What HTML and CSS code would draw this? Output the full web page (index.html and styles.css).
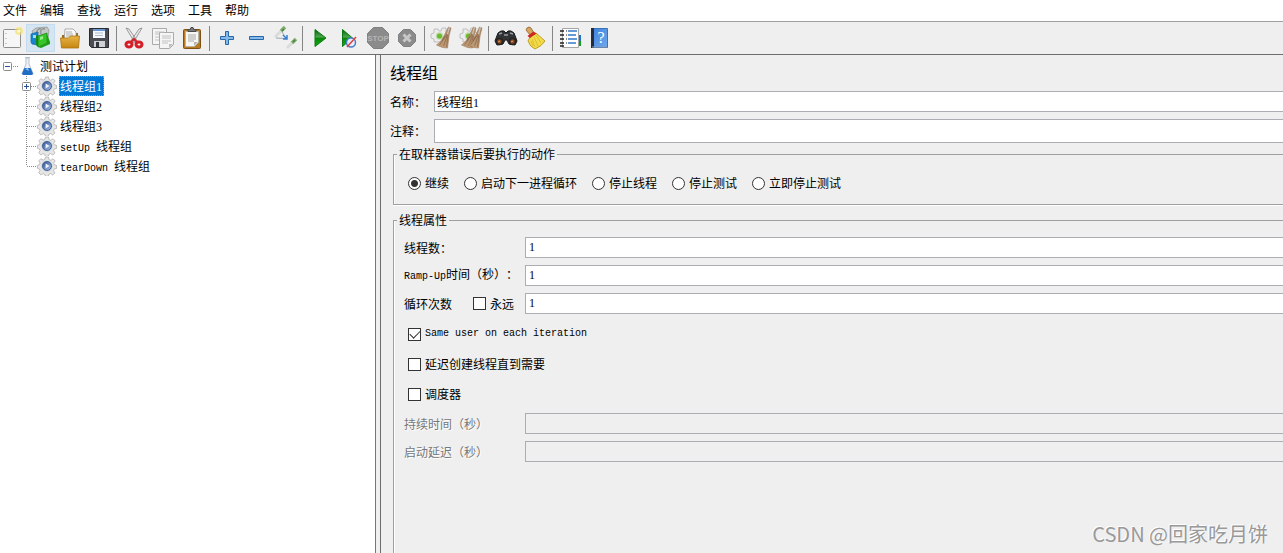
FILE: index.html
```html
<!DOCTYPE html>
<html lang="zh-CN">
<head>
<meta charset="utf-8">
<title>线程组</title>
<link rel="stylesheet" href="styles.css">
</head>
<body>
<svg class="defs" aria-hidden="true">
  <defs>
    <linearGradient id="green" x1="0" y1="0" x2="0" y2="1"><stop offset="0" stop-color="#0a5a14"/><stop offset=".45" stop-color="#4fa852"/><stop offset=".5" stop-color="#07860b"/><stop offset="1" stop-color="#12b012"/></linearGradient>
    <linearGradient id="folder" x1="0" y1="0" x2="0" y2="1"><stop offset="0" stop-color="#e9b447"/><stop offset="1" stop-color="#c58610"/></linearGradient>
    <linearGradient id="blue" x1="0" y1="0" x2="1" y2="1"><stop offset="0" stop-color="#3f82dc"/><stop offset="1" stop-color="#6fa8ee"/></linearGradient>
    <linearGradient id="hub" x1="0" y1="0" x2="1" y2="1"><stop offset="0" stop-color="#30508f"/><stop offset="1" stop-color="#a9c4ea"/></linearGradient>
    <linearGradient id="straw" x1="0" y1="0" x2="0" y2="1"><stop offset="0" stop-color="#a98763"/><stop offset="1" stop-color="#c19c76"/></linearGradient>
    <symbol id="gear" viewBox="0 0 20 20">
      <path d="M8.500 1h3l.6 2.600 1.700.7 2.300-1.500 2.100 2.200-1.500 2.200.7 1.600 2.200.6v3l-2.400.6-.7 1.700 1.500 2.200-2.200 2.100-2.200-1.400-1.700.7-.6 2h-3l-.6-2-1.700-.7-2.200 1.300-2.100-2.100 1.400-2.200-.7-1.600L.4 12.300v-3l2-.6.7-1.700-1.300-2.200 2.100-2.100 2.200 1.400 1.700-.7z" fill="#e6e6e6" stroke="#a8a8a8" stroke-width=".7"/>
      <circle cx="10" cy="10" r="5.600" fill="#c3cbd7"/>
      <circle cx="10" cy="10" r="4.500" fill="url(#hub)" stroke="#34528b" stroke-width=".8"/>
      <path d="M8.600 7.400 12.500 10l-3.900 2.600z" fill="#eef5ff"/>
    </symbol>
    <symbol id="branch" viewBox="0 0 16 20"><path d="M5.500 0v20M6 10.500h10" fill="none" stroke="#8a8a8a" stroke-dasharray="1 1"/></symbol>
    <symbol id="branch-end" viewBox="0 0 16 20"><path d="M5.500 0v10M6 10.500h10" fill="none" stroke="#8a8a8a" stroke-dasharray="1 1"/></symbol>
    <symbol id="broom" viewBox="0 0 24 24">
      <path d="m18.500 1 2.500 1-2 8-1.500 12-5-.5-6-2.500c4-3 6-6 8-10z" fill="url(#straw)" stroke="#9a7654" stroke-width=".6"/>
      <path d="M17 8 9.500 19M17.500 9l-4 11M18 10l-1.500 11M15 10l-3 5" stroke="#7d5d40" stroke-width=".6" fill="none"/>
      <path d="m19.500 1-2 7" stroke="#c9c2bb" stroke-width="1.200"/>
    </symbol>
    <symbol id="cog-back" viewBox="0 0 24 24">
      <path d="M4 3h4l1 2h2l1-3h4v4l2 1v4l-2 1v4H4v-3l-3-1V8l3-1z" fill="#ececec" stroke="#b4b4b4" stroke-width=".8"/>
      <circle cx="9.500" cy="10" r="3.800" fill="#c3dcb2"/><circle cx="9.500" cy="10" r="2.600" fill="#68bd2f"/>
    </symbol>
  </defs>
</svg>

<nav class="menubar">
  <button class="menu">文件</button>
  <button class="menu">编辑</button>
  <button class="menu">查找</button>
  <button class="menu">运行</button>
  <button class="menu">选项</button>
  <button class="menu">工具</button>
  <button class="menu">帮助</button>
</nav>

<div class="toolbar" role="toolbar">
  <button class="tool tool-first" aria-label="新建"><svg viewBox="0 0 24 24"><rect x="3.500" y="3.500" width="17" height="18" rx="1" fill="#f6f6f6" stroke="#8d8d8d"/><path d="M6 7v12" stroke="#999" stroke-dasharray="1 4"/><circle cx="19" cy="5" r="4" fill="#f5e36b" opacity=".7"/><circle cx="19" cy="5" r="1.600" fill="#fffbd8"/></svg></button>
  <button class="tool tool-hot" aria-label="模板"><svg viewBox="0 0 24 24"><path d="M3 5 7 2l11-1 2 3-1 8-12 5z" fill="#c3c7c6" stroke="#8b908f" stroke-width=".7"/><path d="M8 9c-1-4 1-7 4-6M12 8c-1-4 1-6 4-5" stroke="#747a78" fill="none"/><path d="m2 8 7-2v13l-6-1-1-2z" fill="#1a86d2" stroke="#0c66a7" stroke-width=".7"/><path d="M4 9h3v3H4z" fill="#a7dbf7"/><path d="m7 10 2-2v13l-2-2z" fill="#15881a"/><path d="m9 10 9-3v10l-9 4z" fill="#38c529" stroke="#168111" stroke-width=".7"/><path d="m18 8 3 8v2l-9 4-3-1 9-4z" fill="#1aa015"/><path d="M11 11l3-1v3l-3 1z" fill="#98ec87"/></svg></button>
  <button class="tool" aria-label="打开"><svg viewBox="0 0 24 24"><path d="M4 9h4l2-2h10v12H4z" fill="#9a6d1b"/><path d="M7 3h8l3 3v10H6z" fill="#fafafa" stroke="#999" stroke-width=".8"/><path d="M8 6h6M8 8h7M8 10h7" stroke="#aaa"/><path d="M2.500 12h8l2-2h9l-1 12H3.500z" fill="url(#folder)" stroke="#a87312" stroke-width=".8"/></svg></button>
  <button class="tool" aria-label="保存"><svg viewBox="0 0 24 24"><path d="M2.500 2.500h19v19h-17l-2-2z" fill="#4b4e55" stroke="#292b30"/><path d="M6 3h12v9H6z" fill="#f5f8fc"/><path d="M6 3h12v2H6z" fill="#6796d3"/><path d="M8 7h8M8 9.500h8" stroke="#b3bdca"/><path d="M7 15h11v6H7z" fill="#cfd1d4"/><path d="M9 16h3v5H9z" fill="#34373c"/></svg></button>
  <span class="separator"></span>
  <button class="tool" aria-label="剪切"><svg viewBox="0 0 24 24"><path d="m4 2 3 1 9 13-3 1zM20 2l-3 1-9 13 3 1z" fill="#e6e6e6" stroke="#888" stroke-width=".8"/><g fill="none" stroke="#d51d27" stroke-width="3"><ellipse cx="7" cy="18.500" rx="3" ry="2.500"/><ellipse cx="17" cy="18.500" rx="3" ry="2.500"/></g><path d="m9 16 3-3 3 3" stroke="#d51d27" stroke-width="2" fill="none"/></svg></button>
  <button class="tool" aria-label="复制"><svg viewBox="0 0 24 24"><g fill="#f5f5f5" stroke="#aaa"><path d="M1.500 2.500h14v16h-14z"/><path d="M8.500 6.500h14v12l-4 4h-10z"/></g><path d="M4 6h9M4 8h4M4 11h4M4 14h4M11 10h9M11 12h9M11 15h9M11 17h6" stroke="#c2c2c2"/><path d="M18 22v-4h4z" fill="#bdbdbd"/></svg></button>
  <button class="tool" aria-label="粘贴"><svg viewBox="0 0 24 24"><rect x="3.500" y="3.500" width="17" height="19" rx="1" fill="#b87920" stroke="#805115"/><path d="M5.500 5.500h13v11l-4 4h-9z" fill="#f6f6f4" stroke="#b9b2a5"/><path d="M8 5.500V3.500h2l1-2h2l1 2h2v2z" fill="#777" stroke="#4b4b4b"/><path d="M8 9h8M8 11h8M8 13h8M8 15h6" stroke="#aaa"/><path d="M14 20v-4h4z" fill="#b6b6b2"/></svg></button>
  <span class="separator"></span>
  <button class="tool" aria-label="展开"><svg viewBox="0 0 24 24"><path d="M10.500 5.500h3v5h5v3h-5v5h-3v-5h-5v-3h5z" fill="#85bae8" stroke="#2667aa"/></svg></button>
  <button class="tool" aria-label="折叠"><svg viewBox="0 0 24 24"><path d="M5.500 10.500h14v3h-14z" fill="#85bae8" stroke="#2667aa"/></svg></button>
  <button class="tool" aria-label="切换"><svg viewBox="0 0 24 24"><path d="m2 11 6-6M14 22l5-5" stroke="#d9dcd8" stroke-width="3"/><path d="m8 5 4-4M19 17l4-4" stroke="#7fae6c" stroke-width="3.500"/><path d="m9 5 2-2M20 16l2-2" stroke="#4f7d43" stroke-width="1.500"/><path d="m3 12 9 .5M9 6l2 3" fill="none" stroke="#9ba7b2"/><path d="m10 9 4 4m0-4v4h-4" fill="none" stroke="#367fd0" stroke-width="1.500"/></svg></button>
  <span class="separator"></span>
  <button class="tool" aria-label="启动"><svg viewBox="0 0 24 24"><path d="m7 3.500 11 8.500-11 8.500z" fill="url(#green)" stroke="#0b7a10"/></svg></button>
  <button class="tool" aria-label="不停顿启动"><svg viewBox="0 0 24 24"><path d="m5.500 3.500 10 8.500-10 8.500z" fill="url(#green)" stroke="#0b7a10"/><circle cx="14" cy="16.500" r="4.500" fill="#e6eefb" stroke="#477dcc" stroke-width="1.500"/><path d="m10 21 9-10" stroke="#e33f3f" stroke-width="1.500"/></svg></button>
  <button class="tool" aria-label="停止" disabled><svg viewBox="0 0 24 24"><path d="M7.500 1.500h9l6 6v9l-6 6h-9l-6-6v-9z" fill="#8b8b8b" stroke="#808080"/><text x="12" y="15" class="stop-text">STOP</text></svg></button>
  <button class="tool" aria-label="关闭" disabled><svg viewBox="0 0 24 24"><path d="M8.500 3.500h7l5 5v7l-5 5h-7l-5-5v-7z" fill="#8b8b8b" stroke="#808080"/><path d="m8.500 8.500 7 7m0-7-7 7" stroke="#c8c8c8" stroke-width="3"/></svg></button>
  <span class="separator"></span>
  <button class="tool" aria-label="清除"><svg viewBox="0 0 24 24"><use href="#cog-back"/><use href="#broom"/></svg></button>
  <button class="tool" aria-label="清除全部"><svg viewBox="0 0 24 24"><use href="#cog-back"/><use href="#broom" x="-4"/><use href="#broom" x="2"/></svg></button>
  <span class="separator"></span>
  <button class="tool" aria-label="查找"><svg viewBox="0 0 24 24"><path d="M4 7q3-3 6-2l2 2 2-2q3-1 6 2l3 8-2 4-6-1-2-4h-2l-2 4-6 1-2-4z" fill="#303235" stroke="#17191b"/><path d="m5 8 3-1M16 7l3 1M10 9h4" stroke="#9a9da1" stroke-width="1.500"/><circle cx="5.500" cy="15.500" r="3" fill="#8c4a20" stroke="#222" stroke-width="1.500"/><circle cx="18.500" cy="15.500" r="3" fill="#8c4a20" stroke="#222" stroke-width="1.500"/><path d="m4 16 2-1M17 16l2-1" stroke="#e3a075"/></svg></button>
  <button class="tool" aria-label="重置搜索"><svg viewBox="0 0 24 24"><path d="M4 2q2-2 4 0l3 5-4 2-4-5z" fill="#d7a55d" stroke="#8f6027" stroke-width=".8"/><path d="m7 11 6-4 9 8q-3 5-10 8-5-2-7-8z" fill="#f3dc48" stroke="#ad8d15" stroke-width=".8"/><path d="m9 13 3 8m-1-10 4 9m-2-11 5 8m-10-2 2 5" stroke="#cdb02a" stroke-width=".7"/><path d="m4.500 10 6-4.500 3 2L7 12z" fill="#cf2724"/></svg></button>
  <span class="separator"></span>
  <button class="tool" aria-label="函数助手"><svg viewBox="0 0 24 24"><path d="M20 9h3v6h-3z" fill="#246ed0"/><path d="M20 15h3v5h-3z" fill="#1b9928"/><path d="M4.500 2.500h16v19h-16z" fill="#fff" stroke="#a5a5a5"/><path d="M2 5h4M2 9h4M2 13h4M2 17h4M2 20h4" stroke="#222" stroke-width="1.500"/><path d="M10 5h9M10 9h8M10 13h9M10 17h8" stroke="#357ac6" stroke-width="1.500"/><path d="M8 5h1M8 9h1M8 13h1M8 17h1" stroke="#222"/></svg></button>
  <button class="tool" aria-label="帮助"><svg viewBox="0 0 24 24"><path d="M4.500 2.500h16v19h-16z" fill="url(#blue)" stroke="#3873b8"/><path d="M4 2h3v20H4z" fill="#242d3f"/><path d="M5 21h15" stroke="#8c9cb4"/><text x="14" y="17" class="help-text">?</text></svg></button>
</div>

<div class="workspace">
  <aside class="tree">
    <ul class="tree-list">
      <li class="node root">
        <svg class="root-toggle" viewBox="0 0 18 20"><rect x="3.500" y="6.500" width="8" height="8" rx="1" fill="#fff" stroke="#8a8a8a"/><path d="M5 10.500h5" stroke="#264f9c"/><path d="M13 10.500h5" stroke="#8a8a8a" stroke-dasharray="1 1"/></svg>
        <svg class="flask" viewBox="0 0 18 20"><path d="M7 1.500h5M8 2v6L4 17.500q0 1 1 1h9q1 0 1-1L11 8V2z" fill="#eef2f6" stroke="#b6c0c9"/><path d="M6.500 12h6l2.500 5.500q-.5 1.500-2 1.500H6q-1.500 0-2-1.500z" fill="#1f6dc4"/><path d="m7 13 3-1 1 3z" fill="#8cc5f5"/></svg>
        <span class="name">测试计划</span>
      </li>
      <li class="node">
        <svg class="branch" viewBox="0 0 16 20"><use href="#branch"/><rect x="1.500" y="6.500" width="8" height="8" rx="1" fill="#fff" stroke="#8a8a8a"/><path d="M3 10.500h5M5.500 8v5" stroke="#264f9c"/></svg>
        <svg class="gear"><use href="#gear"/></svg><span class="name selected">线程组<span class="digit">1</span></span>
      </li>
      <li class="node"><svg class="branch"><use href="#branch"/></svg><svg class="gear"><use href="#gear"/></svg><span class="name">线程组<span class="digit">2</span></span></li>
      <li class="node"><svg class="branch"><use href="#branch"/></svg><svg class="gear"><use href="#gear"/></svg><span class="name">线程组<span class="digit">3</span></span></li>
      <li class="node"><svg class="branch"><use href="#branch"/></svg><svg class="gear"><use href="#gear"/></svg><span class="name"><span class="latin">setUp </span>线程组</span></li>
      <li class="node"><svg class="branch"><use href="#branch-end"/></svg><svg class="gear"><use href="#gear"/></svg><span class="name"><span class="latin">tearDown </span>线程组</span></li>
    </ul>
  </aside>

  <main class="editor">
    <h1 class="title">线程组</h1>
    <div class="head-row"><label for="name">名称：</label><input class="field" id="name" type="text" value="线程组1"></div>
    <div class="head-row"><label for="comment">注释：</label><input class="field field-tall" id="comment" type="text"></div>

    <fieldset class="group actions">
      <legend>在取样器错误后要执行的动作</legend>
      <div class="radios">
        <label class="choice"><input type="radio" name="action" checked>继续</label>
        <label class="choice"><input type="radio" name="action">启动下一进程循环</label>
        <label class="choice"><input type="radio" name="action">停止线程</label>
        <label class="choice"><input type="radio" name="action">停止测试</label>
        <label class="choice"><input type="radio" name="action">立即停止测试</label>
      </div>
    </fieldset>

    <fieldset class="group properties">
      <legend>线程属性</legend>
      <div class="rows">
        <div class="row"><label for="threads">线程数：</label><input class="field number" id="threads" type="text" value="1"></div>
        <div class="row"><label for="ramp"><span class="latin">Ramp-Up</span>时间（秒）：</label><input class="field number" id="ramp" type="text" value="1"></div>
        <div class="row"><div class="loop"><label for="loops">循环次数</label><label class="choice"><input type="checkbox">永远</label></div><input class="field number" id="loops" type="text" value="1"></div>
      </div>
      <div class="checks">
        <label class="choice"><input type="checkbox" checked><span class="latin">Same user on each iteration</span></label>
        <label class="choice"><input type="checkbox">延迟创建线程直到需要</label>
        <label class="choice"><input type="checkbox">调度器</label>
      </div>
      <div class="rows">
        <div class="row disabled"><label for="duration">持续时间（秒）</label><input class="field" id="duration" type="text" disabled></div>
        <div class="row disabled"><label for="delay">启动延迟（秒）</label><input class="field" id="delay" type="text" disabled></div>
      </div>
    </fieldset>
  </main>
</div>
<div class="watermark">CSDN @回家吃月饼</div>
</body>
</html>
```
FILE: styles.css
```css
* { box-sizing: border-box; }

body {
  margin: 0;
  height: 100vh;
  display: flex;
  flex-direction: column;
  overflow: hidden;
  background: #efefef;
  color: #000;
  font: 12px/16px "Noto Sans CJK SC", sans-serif;
  text-spacing-trim: space-all;
}

button, input { font: inherit; color: inherit; }
svg { display: block; flex: none; }
.defs { position: absolute; width: 0; height: 0; }

.menubar {
  display: flex;
  gap: 13px;
  height: 22px;
  padding: 2px 3px 3px;
  background: #fff;
  border-bottom: 1px solid #a0a0a0;
  flex: none;
}
.menu { padding: 0; border: 0; background: none; }

.toolbar {
  display: flex;
  align-items: center;
  height: 33px;
  border-bottom: 1px solid #6d6d70;
  flex: none;
}
.tool {
  display: flex;
  align-items: center;
  justify-content: center;
  width: 29px;
  height: 28px;
  padding: 0;
  border: 0;
  background: none;
}
.tool svg { width: 24px; height: 24px; }
.tool-first { width: 26px; justify-content: flex-start; }
.tool-hot { background: #d5e5f2; border: 1px solid #c4dcef; }
.separator { width: 6px; height: 25px; display: flex; justify-content: center; }
.separator::before { content: ""; width: 1px; background: #858585; }
.stop-text { font: bold 8px "Liberation Sans", sans-serif; fill: #b4b4b4; text-anchor: middle; }
.help-text { font: 16px "Liberation Serif", serif; fill: #fff; text-anchor: middle; }

.workspace { display: flex; gap: 4px; flex: 1; min-height: 0; }

.tree {
  width: 376px;
  flex: none;
  background: #fff;
  border-right: 1px solid #77777b;
}
.tree-list { list-style: none; margin: 0; padding: 1px 0 0; }
.node { display: flex; height: 20px; padding-left: 21px; }
.root { padding-left: 0; }
.root-toggle { width: 18px; height: 20px; }
.flask { width: 18px; height: 20px; }
.root .name { margin-left: 3px; }
.branch { width: 16px; height: 20px; }
.gear { width: 20px; height: 20px; }
.name { margin-left: 2px; padding: 1px; line-height: 18px; white-space: pre; }
.selected { padding: 0 1px 0 0; border: 1px dotted #f08a24; background: #0078d7; color: #fff; }

.digit { font-family: "Liberation Serif", serif; }
.latin { font: 10px/16px "Liberation Mono", monospace; white-space: pre; }

.editor {
  flex: 1;
  min-width: 0;
  display: flex;
  flex-direction: column;
  padding: 6px 0 0 9px;
  border-left: 1px solid #6d6d70;
}
.title { margin: 0 0 8px; font-size: 16px; line-height: 22px; font-weight: normal; }
.head-row {
  display: grid;
  grid-template-columns: 44px 1fr;
  align-items: center;
  margin-bottom: 7px;
}
.head-row:nth-of-type(2) { margin-bottom: 3px; }

.field {
  width: 100%;
  min-width: 0;
  height: 21px;
  padding: 0 2px;
  border: 1px solid #abadb3;
  border-right: 0;
  border-radius: 0;
  background: #fff;
  font-family: "Liberation Serif", "Noto Sans CJK SC", serif;
}
.field-tall { height: 24px; }
.number { padding: 0 3px; }
.field:disabled { background: #efefef; }

.group {
  min-width: 0;
  margin: 0 0 0 3px;
  padding: 0 0 0 10px;
  border: 1px solid #a0a0a0;
  border-right: 0;
  box-shadow: inset 1px 0 #fff, 0 1px #fff;
}
.group legend { margin-left: -7px; padding: 0 2px; }
.actions { margin-bottom: 7px; }
.radios { display: flex; gap: 15px; padding: 13px 4px; }
.choice { display: flex; align-items: center; gap: 4px; white-space: nowrap; }

input[type="radio"], input[type="checkbox"] {
  appearance: none;
  flex: none;
  width: 13px;
  height: 13px;
  margin: 0;
  border: 1px solid #333;
  background: #fff;
}
input[type="radio"] { border-radius: 50%; }
input[type="radio"]:checked { background: radial-gradient(circle, #333 3px, #fff 4px); }
input[type="checkbox"]:checked { display: grid; place-items: center; }
input[type="checkbox"]:checked::before {
  content: "";
  width: 9px;
  height: 5px;
  border: solid #333;
  border-width: 0 0 1px 1px;
  rotate: -45deg;
  margin-bottom: 3px;
}

.properties { flex: 1; border-bottom: 0; }
.rows { display: grid; gap: 7px; padding-top: 9px; }
.checks { display: grid; grid-auto-rows: 30px; padding: 5px 4px 0; }
.checks + .rows { padding-top: 4px; }
.row { display: grid; grid-template-columns: 121px 1fr; align-items: center; }
.loop { display: flex; gap: 21px; }
.disabled { color: #777; text-shadow: 1px 1px #fff; }

.watermark {
  position: absolute;
  right: 15px;
  bottom: 6px;
  font-size: 20px;
  line-height: 26px;
  color: #999;
  text-shadow: -1px -1px #fff;
}
```
